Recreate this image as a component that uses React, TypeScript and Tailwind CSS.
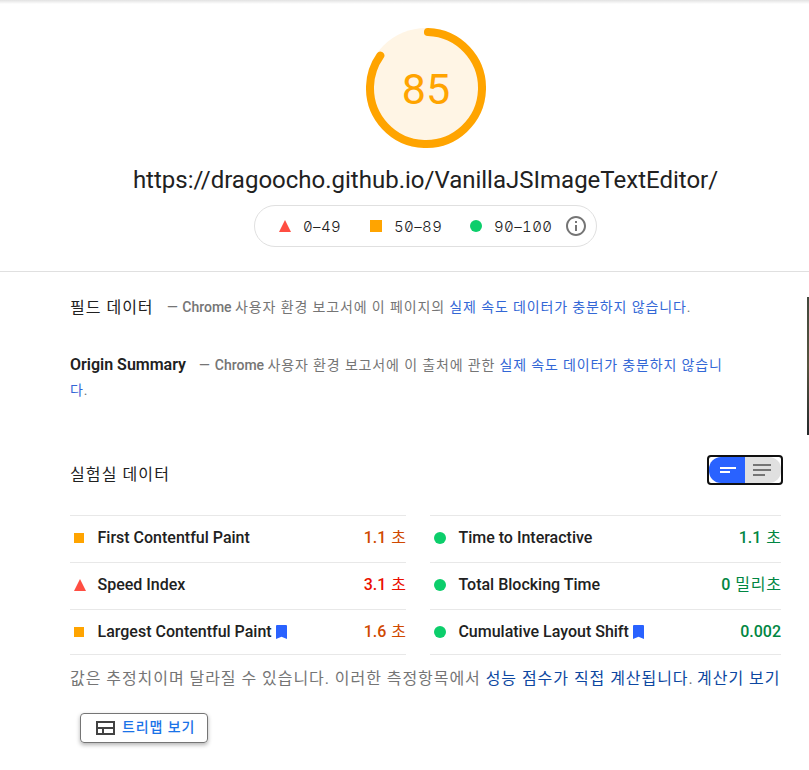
import React from "react";

type Grade = "good" | "average" | "poor";

function Mark({ grade }: { grade: Grade }) {
  if (grade === "good") return <span className="block size-3 rounded-full bg-[#0cce6b]" />;
  if (grade === "average") return <span className="block size-[10px] bg-[#ffa400]" />;
  return (
    <svg className="block size-3" viewBox="0 0 12 12">
      <path d="M6 0 12 12H0Z" fill="#ff4e42" />
    </svg>
  );
}

const valueColor: Record<Grade, string> = {
  good: "text-[#018642]",
  average: "text-[#d04900]",
  poor: "text-[#eb0f00]",
};

interface MetricProps {
  grade: Grade;
  name: string;
  num: string;
  unit?: string;
  bookmark?: boolean;
  last?: boolean;
}

function Metric({ grade, name, num, unit, bookmark, last }: MetricProps) {
  return (
    <div className={`flex items-start border-t border-[#e8e8e8] pt-[10px] ${last ? "h-[46px] border-b" : "h-[47px]"}`}>
      <div className="mt-[6px] flex h-3 w-6 items-center pl-1">
        <Mark grade={grade} />
      </div>
      <div className={`flex flex-1 text-[16px] leading-6 font-medium text-[#212121] ${grade === "good" ? "pl-[4.4px]" : "pl-[3.5px]"}`}>
        <span>{name}</span>
        {bookmark && (
          <svg className="mt-[5px] ml-[4px] h-[14px] w-[11px]" viewBox="0 0 11 14">
            <path d="M1 0H10Q11 0 11 1V14L5.500 11.8 0 14V1Q0 0 1 0Z" fill="#2962ff" />
          </svg>
        )}
      </div>
      <div className={`text-[16px] leading-6 font-medium whitespace-nowrap ${valueColor[grade]}`}>
        {num}
        {unit && <span className="-mr-[0.8px] ml-[5px] font-normal tracking-[0.8px]">{unit}</span>}
      </div>
    </div>
  );
}

function Legend() {
  const text =
    "shrink-0 pt-px font-['Inter'] text-[15px] leading-6 font-light text-[#212121] [font-feature-settings:'zero','tnum'] tracking-[0.4px]";
  return (
    <div className="mt-[9px] flex h-[42px] w-[343px] items-center rounded-full border border-[#e0e0e0] pl-6">
      <svg className="size-3 shrink-0" viewBox="0 0 12 12">
        <path d="M6 0 12 12H0Z" fill="#ff4e42" />
      </svg>
      <span className={`ml-3 w-[67px] ${text}`}>0–49</span>
      <span className="size-3 shrink-0 bg-[#ffa400]" />
      <span className={`ml-3 w-[76px] ${text}`}>50–89</span>
      <span className="size-3 shrink-0 rounded-full bg-[#0cce6b]" />
      <span className={`ml-3 w-[70px] ${text}`}>90–100</span>
      <svg className="size-6 shrink-0" viewBox="0 0 24 24" fill="#757575">
        <path d="M11 17h2v-6h-2v6zm1-15C6.48 2 2 6.48 2 12s4.48 10 10 10 10-4.48 10-10S17.52 2 12 2zm0 18c-4.41 0-8-3.59-8-8s3.59-8 8-8 8 3.59 8 8-3.59 8-8 8zM11 9h2V7h-2v2z" />
      </svg>
    </div>
  );
}

export default function App() {
  return (
    <div className="relative h-[770px] w-[809px] overflow-hidden bg-white font-['Roboto','Noto_Sans_CJK_KR',sans-serif] text-[#212121]">
      <div className="h-1 bg-linear-to-b from-[#e2e2e2] to-white" />
      <header className="flex h-[268px] flex-col items-center border-b border-[#e0e0e0] pt-6 pl-[42px]">
        <div className="flex w-full flex-col items-center">
          <svg className="block size-[120px]" viewBox="0 0 120 120">
            <circle cx="60" cy="60" r="60" fill="#fff5e5" />
            <circle cx="60" cy="60" r="56" fill="none" stroke="#ffa400" strokeWidth="8" strokeLinecap="round" strokeDasharray="296 351.9" transform="rotate(-88 60 60)" />
            <text x="60" y="76" textAnchor="middle" fontSize="43" fill="#ffa400" className="font-['Roboto']">85</text>
          </svg>
          <h1 className="mt-4 h-8 text-[24px] leading-8 whitespace-nowrap">https://dragoocho.github.io/VanillaJSImageTextEditor/</h1>
          <Legend />
        </div>
      </header>

      <main className="ml-[70px] w-[711px]">
        <section className="flex h-[57px] items-center pt-[14px] whitespace-nowrap">
          <h2 className="w-[97px] pt-px text-[16px] font-normal tracking-[1px]">필드 데이터</h2>
          <p className="text-[14px] text-[#757575]">
            <span className="font-medium">—<span className="ml-px"> Chrome </span></span>
            <span className="tracking-[0.87px]">사용자 환경 보고서에 이 페이지의 </span>
            <a className="tracking-[0.87px] text-[#3367d6]">실제 속도 데이터가 충분하지 않습니다</a>.
          </p>
        </section>
        <section className="h-[130px] pt-[23px]">
          <p className="text-[14px] leading-[25px] whitespace-nowrap text-[#757575]">
            <span className="inline-block w-[129px] text-[16px] font-semibold text-[#212121]">Origin Summary</span>
            <span className="font-medium">—<span className="ml-[1.5px]"> Chrome </span></span>
            <span className="tracking-[0.85px]">사용자 환경 보고서에 이 출처에 관한 </span>
            <a className="tracking-[0.85px] text-[#3367d6]">실제 속도 데이터가 충분하지 않습니<br />다</a>.
          </p>
        </section>
        <section>
          <div className="flex h-[56px] items-start justify-between">
            <h2 className="pt-1 text-[16px] leading-6 font-normal tracking-[1.1px]">실험실 데이터</h2>
            <div className="-mt-1 -mr-[2px] flex h-[30px] w-[76px] overflow-hidden rounded-[4px] border-2 border-[#101010]">
              <div className="h-full w-9 rounded-l-[12px] bg-[#2962ff]">
                <svg className="size-full" viewBox="0 0 36 26" fill="#fff">
                  <path d="M11 10h16v2H11zM11 14h10v2H11z" />
                </svg>
              </div>
              <div className="h-full w-9 rounded-r-[12px] bg-[#e0e0e0]">
                <svg className="size-full" viewBox="0 0 36 26" fill="#757575">
                  <path d="M8 7h18v2H8zM8 12h18v2H8zM8 17h12v2H8z" />
                </svg>
              </div>
            </div>
          </div>
          <div className="grid grid-cols-[336px_351px] gap-x-6">
            <div>
              <Metric grade="average" name="First Contentful Paint" num="1.1" unit="초" />
              <Metric grade="poor" name="Speed Index" num="3.1" unit="초" />
              <Metric grade="average" name="Largest Contentful Paint" num="1.6" unit="초" bookmark last />
            </div>
            <div>
              <Metric grade="good" name="Time to Interactive" num="1.1" unit="초" />
              <Metric grade="good" name="Total Blocking Time" num="0" unit="밀리초" />
              <Metric grade="good" name="Cumulative Layout Shift" num="0.002" bookmark last />
            </div>
          </div>
          <p className="mt-3 text-[16px] leading-6 tracking-[0.95px] whitespace-nowrap text-[#757575]">
            값은 추정치이며 달라질 수 있습니다. 이러한 측정항목에서 <a className="text-[#0d47a1]">성능 점수가 직접 계산됩니다</a>. <a className="-ml-[1.5px] text-[#0d47a1]">계산기 보기</a>
          </p>
          <button className="mt-[22px] ml-[10px] flex h-[30px] w-[128px] items-center rounded-[4px] border border-[#757575] pl-[15px] shadow-[0_2px_4px_rgba(0,0,0,0.3)]">
            <svg className="h-[14px] w-[19px]" viewBox="0 0 19 14" fill="none" stroke="#424242" strokeWidth="2">
              <path d="M1 1H18V13H1ZM1 7H18M7 7V13" />
            </svg>
            <span className="-mt-[3px] ml-[7px] text-[14px] leading-6 font-medium tracking-[0.9px] whitespace-nowrap text-[#1a73e8]">트리맵 보기</span>
          </button>
        </section>
      </main>
      {/* Sliver of the page thumbnail that runs past the right edge */}
      <div className="absolute top-[297px] right-0 h-[138px] w-[2px] bg-linear-to-b from-[#42483d] via-[#55543e] to-[#24292b]" />
    </div>
  );
}
